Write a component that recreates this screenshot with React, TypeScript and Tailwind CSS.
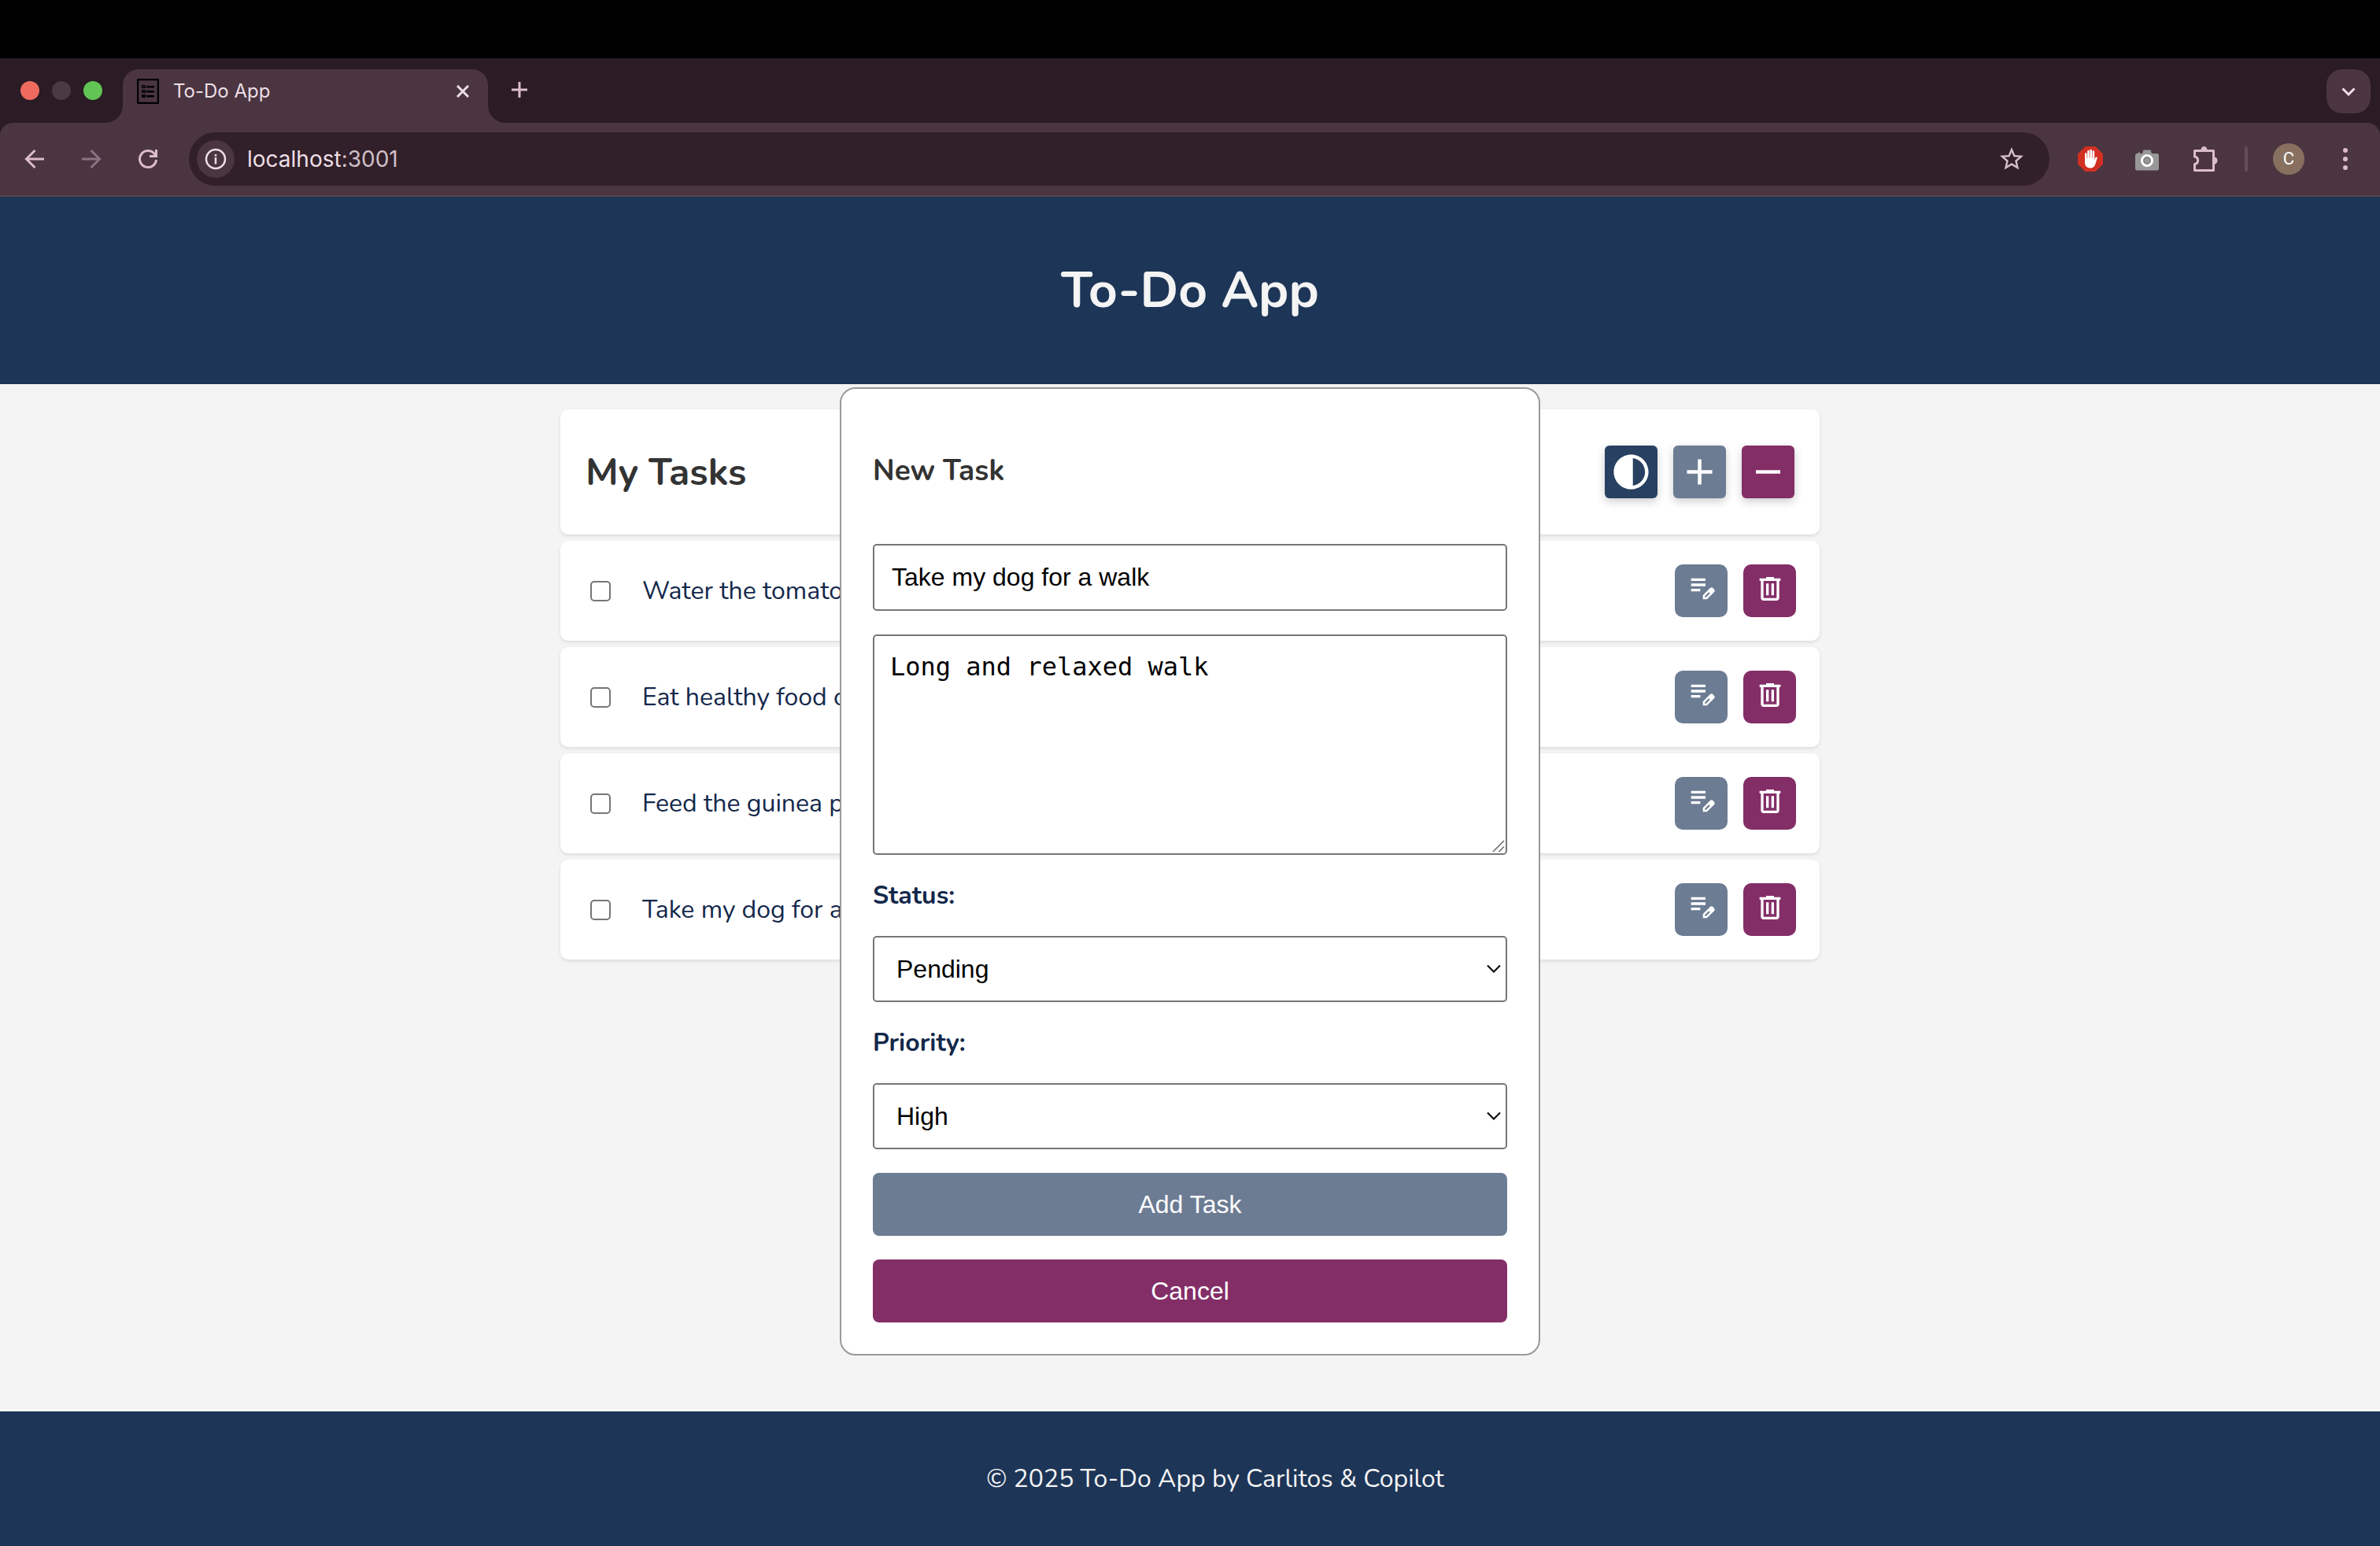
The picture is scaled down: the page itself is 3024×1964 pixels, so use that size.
import { useState } from "react";
import type { ReactNode } from "react";
import { MdAdd, MdContrast, MdRemove, MdStarOutline } from "react-icons/md";

const tasks = [
  "Water the tomatoes",
  "Eat healthy food or pay",
  "Feed the guinea pigs",
  "Take my dog for a walk",
];

function EditNoteIcon() {
  return (
    <svg className="size-10" viewBox="0 -960 960 960" fill="currentColor" aria-hidden="true">
      <path d="M160-400v-80h280v80H160Zm0-160v-80h440v80H160Zm0-160v-80h440v80H160Zm360 560v-123l221-220q9-9 20-13t22-4q12 0 23 4.5t20 13.5l37 37q8 9 12.5 20t4.5 22q0 11-4 22.5T863-380L643-160H520Zm300-263-37-37 37 37ZM580-220h38l121-122-18-19-19-18-122 121v38Zm141-141-19-18 37 37-18-19Z" />
    </svg>
  );
}

function DeleteIcon() {
  return (
    <svg className="size-10" viewBox="0 -960 960 960" fill="currentColor" aria-hidden="true">
      <path d="M280-120q-33 0-56.5-23.5T200-200v-520h-40v-80h200v-40h240v40h200v80h-40v520q0 33-23.5 56.5T680-120H280Zm400-600H280v520h400v-520ZM360-280h80v-360h-80v360Zm160 0h80v-360h-80v360ZM280-720v520-520Z" />
    </svg>
  );
}

function TabStrip() {
  return (
    <div className="flex h-[82px] items-end bg-[#2b1b24]">
      <div className="flex h-[82px] w-[134px] items-center gap-4 pl-[26px]">
        <button aria-label="Close window" className="size-6 rounded-full bg-[#ee6a5f]" />
        <button aria-label="Minimize window" className="size-6 rounded-full bg-[#4a3942]" />
        <button aria-label="Zoom window" className="size-6 rounded-full bg-[#61c454]" />
      </div>
      <svg className="size-[22px]" viewBox="0 0 22 22" fill="#4a3540" aria-hidden="true">
        <path d="M22 0v22H0A22 22 0 0 0 22 0z" />
      </svg>
      <div className="flex h-[68px] w-[464px] items-center rounded-t-[20px] bg-[#4a3540] pr-5 pb-3 pl-[18px] text-[#eddfe6]">
        <svg className="h-8 w-7" viewBox="0 0 28 32" aria-hidden="true">
          <rect x="1" y="1" width="26" height="30" rx="1" fill="none" stroke="#000" strokeWidth="2.500" />
          <g fill="#000">
            <rect x="6" y="8" width="5" height="4" />
            <rect x="12" y="9" width="10" height="2.500" />
            <rect x="6" y="14" width="5" height="4" />
            <rect x="12" y="15" width="10" height="2.500" />
            <rect x="6" y="20" width="5" height="4" />
            <rect x="12" y="21" width="10" height="2.500" />
          </g>
          <path d="M7 9l1.500 1.500L10 9M7 15l1.500 1.500L10 15" fill="none" stroke="#4a3540" />
        </svg>
        <span className="ml-[18px] flex-1 text-[24px] leading-8">To-Do App</span>
        <button aria-label="Close tab" className="flex size-6 items-center justify-center">
          <svg className="size-4" viewBox="0 0 16 16" stroke="currentColor" strokeWidth="3" aria-hidden="true">
            <path d="M1 1l14 14M15 1L1 15" />
          </svg>
        </button>
      </div>
      <svg className="size-[22px]" viewBox="0 0 22 22" fill="#4a3540" aria-hidden="true">
        <path d="M0 0v22h22A22 22 0 0 1 0 0z" />
      </svg>
      <button aria-label="New tab" className="ml-2 flex h-[82px] items-center pb-[2px] text-[#dcbccb]">
        <svg className="size-5" viewBox="0 0 20 20" stroke="currentColor" strokeWidth="3" aria-hidden="true">
          <path d="M10 0v20M0 10h20" />
        </svg>
      </button>
      <button
        aria-label="Search tabs"
        className="mr-3 mb-3 ml-auto flex size-14 items-center justify-center rounded-[20px] bg-[#4a3540] text-[#f4dde7]"
      >
        <svg className="h-[11px] w-[18px]" viewBox="0 0 18 11" fill="none" stroke="currentColor" strokeWidth="3" aria-hidden="true">
          <path d="M1.500 1.500L9 9l7.500-7.500" />
        </svg>
      </button>
    </div>
  );
}

function NavIcon({ label, className, children }: { label: string; className: string; children: ReactNode }) {
  return (
    <button aria-label={label} className={className}>
      <svg className="size-8" viewBox="0 0 32 32" fill="none" stroke="currentColor" strokeWidth="3" aria-hidden="true">
        {children}
      </svg>
    </button>
  );
}

function Toolbar() {
  return (
    <div className="bg-[#2b1b24]">
      <div className="flex h-[94px] items-center rounded-t-[16px] border-b-2 border-[#54454c] bg-[#4a3540] pr-7 pl-7 text-[#dcbccb]">
        <NavIcon label="Back" className="mr-10">
          <path d="M28 16H6M16.500 5L5.500 16l11 11" />
        </NavIcon>
        <NavIcon label="Forward" className="mr-10 text-[#8a7380]">
          <path d="M4 16h22M15.500 5l11 11-11 11" />
        </NavIcon>
        <NavIcon label="Reload" className="mr-9">
          <path d="M26.500 17A10.500 10.500 0 1 1 24 9.200l2.500 2.600" />
          <path d="M26.500 4v8.500H18" />
          <path d="M27.500 7v6.500H21z" fill="currentColor" stroke="none" />
        </NavIcon>
        <div className="flex h-[68px] flex-1 items-center rounded-full bg-[#311f29] pr-[30px] pl-[10px]">
          <button
            aria-label="Site information"
            className="flex size-12 items-center justify-center rounded-full bg-[#4a3540] text-[#eddfe6]"
          >
            <svg className="size-7" viewBox="0 0 28 28" fill="none" stroke="currentColor" aria-hidden="true">
              <circle cx="14" cy="14" r="12" strokeWidth="2.500" />
              <path d="M14 12v8.500M14 8v2.500" strokeWidth="2.500" />
            </svg>
          </button>
          <a href="http://localhost:3001" className="ml-4 flex-1 text-[28px] leading-9 text-[#cfbfc7]">
            <span className="text-[#eddfe6]">localhost</span>:3001
          </a>
          <button aria-label="Bookmark this tab" className="text-[#d3c0ca]">
            <MdStarOutline className="size-9" />
          </button>
        </div>
        <div className="ml-9 flex items-center">
          <button aria-label="Ad blocker">
            <svg className="size-8" viewBox="0 0 32 32" aria-hidden="true">
              <path d="M9.500 0h13L32 9.500v13L22.500 32h-13L0 22.500v-13z" fill="#d22f23" />
              <path
                d="M9 9.500a1.300 1.300 0 0 1 2.600 0V15h.6V6a1.300 1.300 0 0 1 2.600 0v8.500h.6V5a1.300 1.300 0 0 1 2.600 0v9.500h.6V6.500a1.300 1.300 0 0 1 2.600 0V17l1-2.800c.6-1.300 2.800-1 2.500.5L22.500 22c-1 3.500-3 5.500-6.500 5.500-4.500 0-7-3-7-7z"
                fill="#fff"
              />
            </svg>
          </button>
          <button aria-label="Screenshot" className="ml-10">
            <svg className="size-8" viewBox="0 0 32 32" aria-hidden="true">
              <path d="M4 9l1.500-2L7.500 9H10l1.500-4.500h9L22 9h6.500A2.500 2.500 0 0 1 31 11.500V28a2.500 2.500 0 0 1-2.500 2.500h-25A2.500 2.500 0 0 1 1 28V11.500A2.500 2.500 0 0 1 4 9z" fill="#989898" />
              <circle cx="16" cy="18" r="6.500" fill="#989898" stroke="#fff" strokeWidth="3" />
              <circle cx="16" cy="18" r="4" fill="none" stroke="#7c7c7c" strokeWidth="1.500" />
            </svg>
          </button>
          <button aria-label="Extensions" className="ml-10">
            <svg className="h-8 w-9" viewBox="0 0 36 32" aria-hidden="true">
              <path
                d="M4.500 5.500h24v25h-24V22.500c5.500-1 5.500-8.500 0-9.500z"
                fill="none"
                stroke="currentColor"
                strokeWidth="3"
                strokeLinejoin="round"
              />
              <path d="M12.500 4.500a4 4.500 0 0 1 8 0zM29.500 13.500a4 4.500 0 0 1 0 9z" fill="currentColor" />
            </svg>
          </button>
          <div className="ml-8 h-8 w-1 rounded-full bg-[#634d58]" />
          <button
            aria-label="Profile"
            className="ml-8 flex size-10 items-center justify-center rounded-full bg-[#87705f] font-[Roboto,sans-serif] text-[22px] leading-6 text-white"
          >
            C
          </button>
          <button aria-label="Browser menu" className="ml-9">
            <svg className="size-8" viewBox="0 0 32 32" fill="currentColor" aria-hidden="true">
              <circle cx="16" cy="5" r="3" />
              <circle cx="16" cy="16" r="3" />
              <circle cx="16" cy="27" r="3" />
            </svg>
          </button>
        </div>
      </div>
    </div>
  );
}

function TaskRow({ title }: { title: string }) {
  return (
    <li className="flex h-[127px] items-center rounded-[10px] bg-white pr-[30px] pl-[38px] shadow-[0_2px_4px_rgba(0,0,0,0.1)]">
      <label className="flex flex-1 items-center gap-10 text-[32px] leading-10 text-[#14284b]">
        <input
          type="checkbox"
          className="size-[26px] appearance-none rounded-[5px] border-2 border-[#767676] bg-white checked:bg-[#1d3557]"
        />
        {title}
      </label>
      <div className="flex gap-5 text-white">
        <button
          aria-label={"Edit " + title}
          className="flex size-[67px] items-center justify-center rounded-[10px] bg-[#6c7c93] pb-[6px]"
        >
          <EditNoteIcon />
        </button>
        <button
          aria-label={"Delete " + title}
          className="flex size-[67px] items-center justify-center rounded-[10px] bg-[#832e67] pb-[6px]"
        >
          <DeleteIcon />
        </button>
      </div>
    </li>
  );
}

function SelectField({
  id,
  label,
  options,
  initial,
}: {
  id: string;
  label: string;
  options: string[];
  initial: string;
}) {
  const [value, setValue] = useState(initial);
  return (
    <div className="flex flex-col">
      <label htmlFor={id} className="pt-[31px] pb-[30px] text-[32px] leading-[42px] font-bold text-[#14284b]">
        {label}
      </label>
      <div className="relative">
        <select
          id={id}
          value={value}
          onChange={(event) => setValue(event.target.value)}
          className="h-[84px] w-full appearance-none rounded-[5px] border-2 border-[#767676] bg-white px-7 font-['Liberation_Sans',Arial,sans-serif] text-[32px] text-black"
        >
          {options.map((option) => (
            <option key={option}>{option}</option>
          ))}
        </select>
        <svg
          className="pointer-events-none absolute top-9 right-2 h-3 w-[18px]"
          viewBox="0 0 18 12"
          fill="none"
          stroke="#000"
          strokeWidth="2"
          aria-hidden="true"
        >
          <path d="M1 1.500l8 8 8-8" />
        </svg>
      </div>
    </div>
  );
}

function TaskDialog() {
  const [title, setTitle] = useState("Take my dog for a walk");
  const [details, setDetails] = useState("Long and relaxed walk");
  return (
    <div className="absolute inset-0 flex items-center justify-center">
      <form
        role="dialog"
        aria-labelledby="dialog-title"
        className="flex w-[890px] flex-col rounded-[20px] border-2 border-[#999] bg-white p-10"
      >
        <h3 id="dialog-title" className="pt-[39px] pb-[67px] text-[37px] leading-[51px] font-bold text-[#333]">
          New Task
        </h3>
        <input
          type="text"
          aria-label="Title"
          value={title}
          onChange={(event) => setTitle(event.target.value)}
          className="h-[85px] rounded-[5px] border-2 border-[#767676] px-[22px] font-['Liberation_Sans',Arial,sans-serif] text-[32px] text-black"
        />
        <div className="relative mt-[30px]">
          <textarea
            aria-label="Description"
            value={details}
            onChange={(event) => setDetails(event.target.value)}
            className="block h-[280px] w-full resize-none rounded-[5px] border-2 border-[#767676] px-5 py-5 font-['DejaVu_Sans_Mono',monospace] text-[32px] leading-[38px] text-black"
          />
          <svg
            className="pointer-events-none absolute right-[3px] bottom-[3px] size-4"
            viewBox="0 0 16 16"
            stroke="#666"
            strokeWidth="1.500"
            aria-hidden="true"
          >
            <path d="M1 15L15 1M8.500 15L15 8.500" />
          </svg>
        </div>
        <SelectField id="status" label="Status:" options={["Pending", "Completed"]} initial="Pending" />
        <SelectField id="priority" label="Priority:" options={["Low", "Medium", "High"]} initial="High" />
        <div className="flex flex-col gap-[30px] pt-[30px] font-['Liberation_Sans',Arial,sans-serif] text-[32px] text-white">
          <button type="button" className="h-20 rounded-[8px] bg-[#6c7c93]">
            Add Task
          </button>
          <button type="button" className="h-20 rounded-[8px] bg-[#832e67]">
            Cancel
          </button>
        </div>
      </form>
    </div>
  );
}

export default function App() {
  return (
    <div className="flex min-h-screen flex-col bg-black pt-[74px] font-[Inter,sans-serif]">
      <TabStrip />
      <Toolbar />
      <div className="relative flex flex-1 flex-col bg-[#f4f4f4] font-[Nunito,Lato,sans-serif]">
        <header className="flex h-[238px] items-center justify-center bg-[#1d3557]">
          <h1 className="text-[64px] leading-[88px] font-bold text-[#f4f4f4]">To-Do App</h1>
        </header>
        <main className="mx-auto flex w-full max-w-[1600px] flex-1 flex-col gap-2 pt-8">
          <div className="flex h-[159px] items-center justify-between rounded-[10px] bg-white px-8 shadow-[0_2px_4px_rgba(0,0,0,0.1)]">
            <h2 className="text-[48px] leading-[66px] font-bold text-[#333]">My Tasks</h2>
            <div className="flex gap-5 text-white">
              <button
                aria-label="Toggle theme"
                className="flex size-[67px] items-center justify-center rounded-md bg-[#284162] shadow-[0_4px_12px_rgba(0,0,0,0.2)]"
              >
                <MdContrast className="size-[53px]" />
              </button>
              <button
                aria-label="Add task"
                className="flex size-[67px] items-center justify-center rounded-md bg-[#6c7c93] shadow-[0_4px_12px_rgba(0,0,0,0.2)]"
              >
                <MdAdd className="size-[55px]" />
              </button>
              <button
                aria-label="Remove tasks"
                className="flex size-[67px] items-center justify-center rounded-md bg-[#832e67] shadow-[0_4px_12px_rgba(0,0,0,0.2)]"
              >
                <MdRemove className="size-[53px]" />
              </button>
            </div>
          </div>
          <ul className="flex flex-col gap-2">
            {tasks.map((task) => (
              <TaskRow key={task} title={task} />
            ))}
          </ul>
        </main>
        <footer className="flex h-[171px] items-center justify-center bg-[#1d3557] pl-16">
          <p className="text-[32px] leading-[44px] text-[#f4f4f4]">© 2025 To-Do App by Carlitos &amp; Copilot</p>
        </footer>
        <TaskDialog />
      </div>
    </div>
  );
}
